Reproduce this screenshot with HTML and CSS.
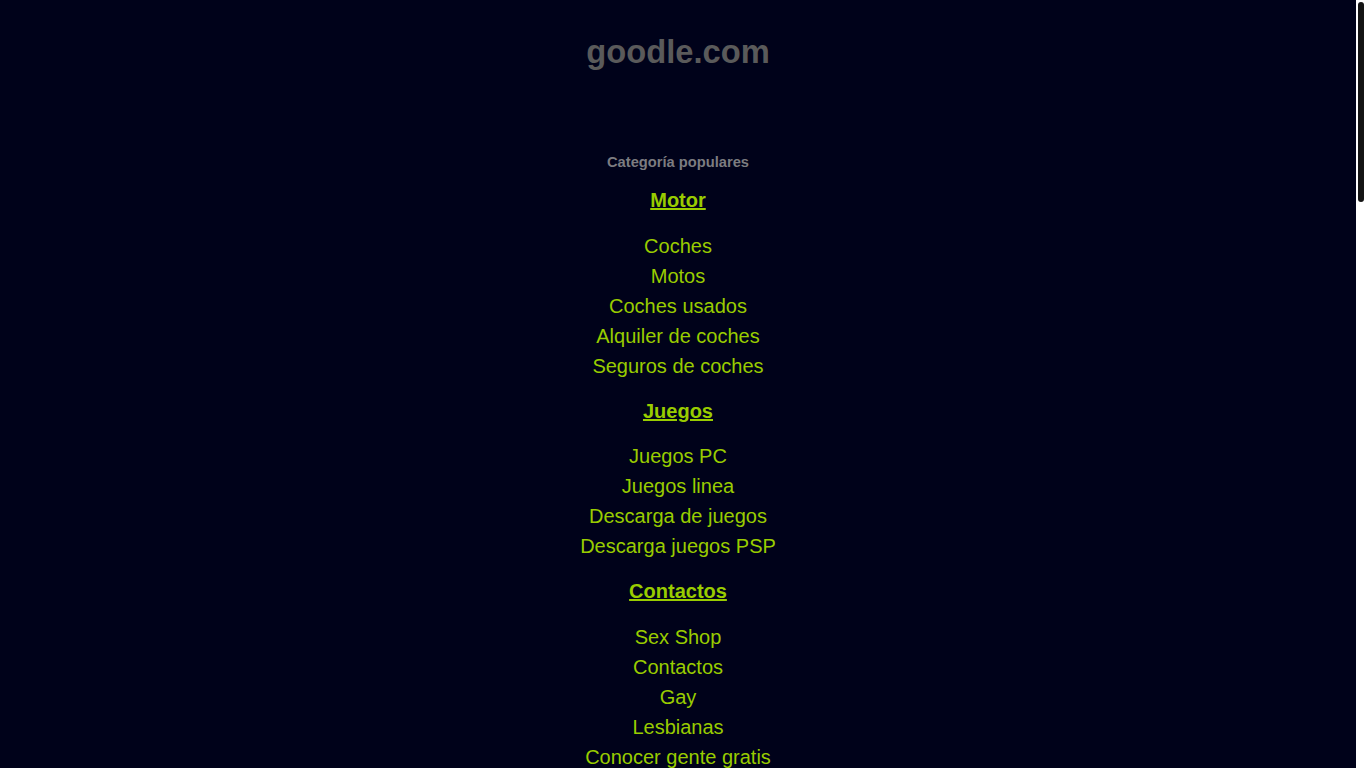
FILE: index.html
```html
<!DOCTYPE html>
<html lang="es">
<head>
<meta charset="utf-8">
<title>goodle.com</title>
<link rel="stylesheet" href="styles.css">
</head>
<body>
<div class="page">
  <h1 class="title">goodle.com</h1>
  <p class="subtitle">Categoría populares</p>
  <div class="sections">
    <section class="cat">
      <a class="cat-head" href="#">Motor</a>
      <ul class="links">
        <li><a href="#">Coches</a></li>
        <li><a href="#">Motos</a></li>
        <li><a href="#">Coches usados</a></li>
        <li><a href="#">Alquiler de coches</a></li>
        <li><a href="#">Seguros de coches</a></li>
      </ul>
    </section>
    <section class="cat">
      <a class="cat-head" href="#">Juegos</a>
      <ul class="links">
        <li><a href="#">Juegos PC</a></li>
        <li><a href="#">Juegos linea</a></li>
        <li><a href="#">Descarga de juegos</a></li>
        <li><a href="#">Descarga juegos PSP</a></li>
      </ul>
    </section>
    <section class="cat">
      <a class="cat-head" href="#">Contactos</a>
      <ul class="links">
        <li><a href="#">Sex Shop</a></li>
        <li><a href="#">Contactos</a></li>
        <li><a href="#">Gay</a></li>
        <li><a href="#">Lesbianas</a></li>
        <li><a href="#">Conocer gente gratis</a></li>
      </ul>
    </section>
  </div>
</div>
<div class="scrollbar"><div class="thumb"></div></div>
</body>
</html>
```

FILE: styles.css
```css
html {
  background: #00021a;
}
body {
  margin: 0;
  background: #00021a;
  font-family: "Liberation Sans", Arial, sans-serif;
}
.page {
  display: flex;
  flex-direction: column;
  align-items: center;
  padding-top: 32px;
  padding-right: 10px;
  min-height: 2950px;
  box-sizing: border-box;
}
.scrollbar {
  position: fixed;
  top: 0;
  right: 0;
  width: 10px;
  height: 100vh;
  background: #ffffff;
}
.thumb {
  position: absolute;
  top: 2px;
  left: 2px;
  width: 6px;
  height: 200px;
  background: #141414;
  border-radius: 3px;
}
.title {
  margin: 0;
  font-size: 32.7px;
  line-height: 40px;
  font-weight: bold;
  color: #5a5a5a;
}
.subtitle {
  margin: 80px 0 0;
  font-size: 14.7px;
  line-height: 20px;
  font-weight: bold;
  color: #7c7c80;
}
.sections {
  margin-top: 13px;
  display: flex;
  flex-direction: column;
  align-items: center;
  gap: 15px;
}
.cat {
  display: flex;
  flex-direction: column;
  align-items: center;
}
.cat-head {
  font-size: 20px;
  line-height: 30px;
  font-weight: bold;
  color: #99cc00;
  text-decoration: underline;
}
.links {
  list-style: none;
  margin: 15.5px 0 0;
  padding: 0;
  display: flex;
  flex-direction: column;
  align-items: center;
}
.links li {
  font-size: 20px;
  line-height: 30px;
}
.links a {
  color: #99cc00;
  text-decoration: none;
}
```
